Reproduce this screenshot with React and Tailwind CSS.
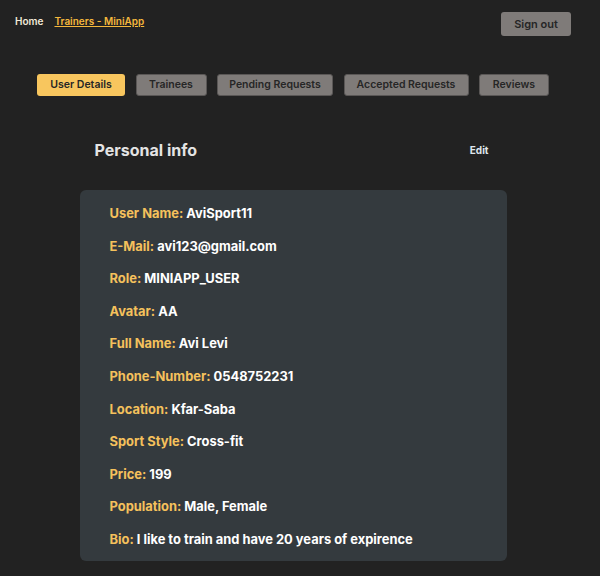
import React from "react";

const rows = [
  ["User Name:", "AviSport11"],
  ["E-Mail:", "avi123@gmail.com"],
  ["Role:", "MINIAPP_USER"],
  ["Avatar:", "AA"],
  ["Full Name:", "Avi Levi"],
  ["Phone-Number:", "0548752231"],
  ["Location:", "Kfar-Saba"],
  ["Sport Style:", "Cross-fit"],
  ["Price:", "199"],
  ["Population:", "Male, Female"],
  ["Bio:", "I like to train and have 20 years of expirence"],
];

const tabs = [
  ["User Details", "w-[88px]"],
  ["Trainees", "w-[71px]"],
  ["Pending Requests", "w-[116px]"],
  ["Accepted Requests", "w-[125px]"],
  ["Reviews", "w-[70px]"],
];

export default function App() {
  return (
    <div className="min-h-[576px] w-[600px] bg-[#222222]" style={{ fontFamily: "Inter, 'Noto Sans', sans-serif" }}>
      <div className="w-[586px]">
        <div className="flex items-start justify-between pl-[15px] pr-[15px] pt-[12px]">
          <div className="flex gap-[11px] pt-[2px] text-[10px] font-semibold leading-[14px]">
            <span className="text-[#f3ead9]">Home</span>
            <span className="text-[#f5b83d] underline">Trainers - MiniApp</span>
          </div>
          <button className="h-[24px] w-[70px] rounded-[3px] bg-[#7f7b79] text-[11px] font-semibold text-[#262626]">
            Sign out
          </button>
        </div>
        <div className="mt-[38px] flex justify-center gap-[10.5px]">
          {tabs.map(([t, w], i) => (
            <button
              key={t}
              className={
                "h-[22px] rounded-[3px] text-[10.5px] font-semibold text-[#262626] " +
                w +
                " " +
                (i === 0 ? "bg-[#f8c65e]" : "border border-[#5a5756] bg-[#7f7b79]")
              }
            >
              {t}
            </button>
          ))}
        </div>
        <div className="mx-auto mt-[44px] w-[427px]">
          <div className="flex items-center justify-between pl-[15px] pr-[18px]">
            <h2 className="text-[16px] font-bold leading-[20px] text-[#e4e4e4]">Personal info</h2>
            <span className="text-[10px] font-bold text-[#dfe6ee]">Edit</span>
          </div>
          <div className="mt-[30px] flex flex-col gap-[12.6px] rounded-[6px] bg-[#343a3e] pb-[11px] pl-[30px] pt-[14px]">
            {rows.map(([k, v]) => (
              <p key={k} className="text-[12.9px] font-bold leading-[20px]">
                <span className="text-[#f5c15c]">{k}</span>{" "}
                <span className="text-white">{v}</span>
              </p>
            ))}
          </div>
        </div>
      </div>
    </div>
  );
}
